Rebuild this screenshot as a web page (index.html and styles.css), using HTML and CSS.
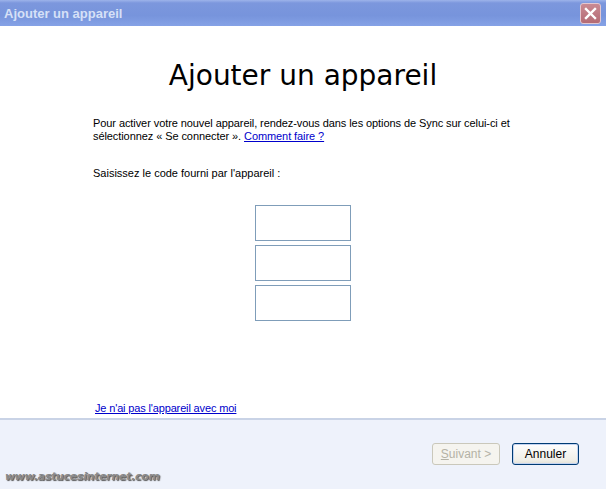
FILE: index.html
```html
<!DOCTYPE html>
<html lang="fr">

<head>
    <meta charset="UTF-8">
    <title>Ajouter un appareil</title>
    <link rel="stylesheet" href="styles.css">
</head>

<body>
    <div class="window">
        <div class="titlebar">
            <span class="title">Ajouter un appareil</span>
            <span class="close">
                <svg width="13" height="13" viewBox="0 0 13 13">
                    <path d="M2 2 L11 11 M11 2 L2 11" stroke="#fff" stroke-width="2.4" stroke-linecap="square"/>
                </svg>
            </span>
        </div>

        <div class="content">
            <h1>Ajouter un appareil</h1>
            <p class="intro">Pour activer votre nouvel appareil, rendez-vous dans les options de Sync sur celui-ci et<br>
                sélectionnez « Se connecter ». <a href="#">Comment faire ?</a></p>
            <p class="prompt">Saisissez le code fourni par l'appareil :</p>

            <div class="codes">
                <input type="text" class="code">
                <input type="text" class="code">
                <input type="text" class="code">
            </div>

            <a href="#" class="nodevice">Je n'ai pas l'appareil avec moi</a>
        </div>

        <div class="footer">
            <div class="buttons">
                <button type="button" class="btn" disabled><u>S</u>uivant &gt;</button>
                <button type="button" class="btn default">Annuler</button>
            </div>
            <div class="watermark">www.astucesinternet.com</div>
        </div>
    </div>
</body>

</html>
```

FILE: styles.css
```css
body {
    margin: 0;
    font-family: "Liberation Sans", Tahoma, sans-serif;
    font-size: 11px;
    background: #fff;
}

.window {
    width: 606px;
    height: 489px;
    display: flex;
    flex-direction: column;
}

.titlebar {
    height: 26px;
    display: flex;
    align-items: center;
    justify-content: space-between;
    padding: 0 5px 0 4px;
    background: linear-gradient(#9db3ea 0, #7c97dd 3px, #7794dc 60%, #85a2e6 100%);
}

.title {
    font-family: "Liberation Sans", Arial, sans-serif;
    font-weight: bold;
    font-size: 13px;
    color: #d6e0f7;
}

.close {
    width: 19px;
    height: 19px;
    border: 1px solid #e2c7d0;
    border-radius: 3px;
    background: linear-gradient(#c98a93, #b46b74);
    display: flex;
    align-items: center;
    justify-content: center;
}

.content {
    flex: 1;
    padding: 0 0 0 93px;
    display: flex;
    flex-direction: column;
    border-bottom: 2px solid #c9d3e6;
}

h1 {
    margin: 32px 0 0 -93px;
    text-align: center;
    font-family: "DejaVu Sans", Tahoma, sans-serif;
    font-weight: normal;
    font-size: 28px;
    line-height: 36px;
    color: #000;
}

.intro {
    margin: 23px 0 0;
    line-height: 13px;
    letter-spacing: -0.08px;
}

a {
    color: #0000cc;
}

.prompt {
    margin: 24px 0 0;
    line-height: 13px;
}

.codes {
    display: flex;
    flex-direction: column;
    gap: 4px;
    margin: 25px 0 0 162px;
}

.code {
    width: 96px;
    height: 36px;
    box-sizing: border-box;
    border: 1px solid #7f9db9;
    margin: 0;
}

.nodevice {
    margin: auto 0 3px 2px;
    line-height: 13px;
    letter-spacing: -0.15px;
}

.footer {
    height: 69px;
    background: #eef2fb;
    position: relative;
}

.buttons {
    display: flex;
    justify-content: flex-end;
    gap: 12px;
    padding: 23px 27px 0 0;
}

.btn {
    width: 68px;
    height: 22px;
    font-family: "Liberation Sans", Tahoma, sans-serif;
    font-size: 12px;
    border-radius: 3px;
    padding: 0;
    background: #f5f4ef;
    border: 1px solid #cac8bb;
    color: #b4b2a6;
}

.btn.default {
    width: 67px;
    border: 1px solid #003c74;
    background: linear-gradient(#fefefe, #f0efe8 80%, #e3e1d6);
    color: #000;
    box-shadow: inset 0 0 0 1px #c4d4f0;
}

.watermark {
    position: absolute;
    left: 5px;
    bottom: 6px;
    font-family: "DejaVu Sans", Verdana, sans-serif;
    font-weight: bold;
    font-style: italic;
    font-size: 11px;
    color: #8a8a8a;
    text-shadow: 1px 1px 1px #555;
    letter-spacing: -0.3px;
}
```
